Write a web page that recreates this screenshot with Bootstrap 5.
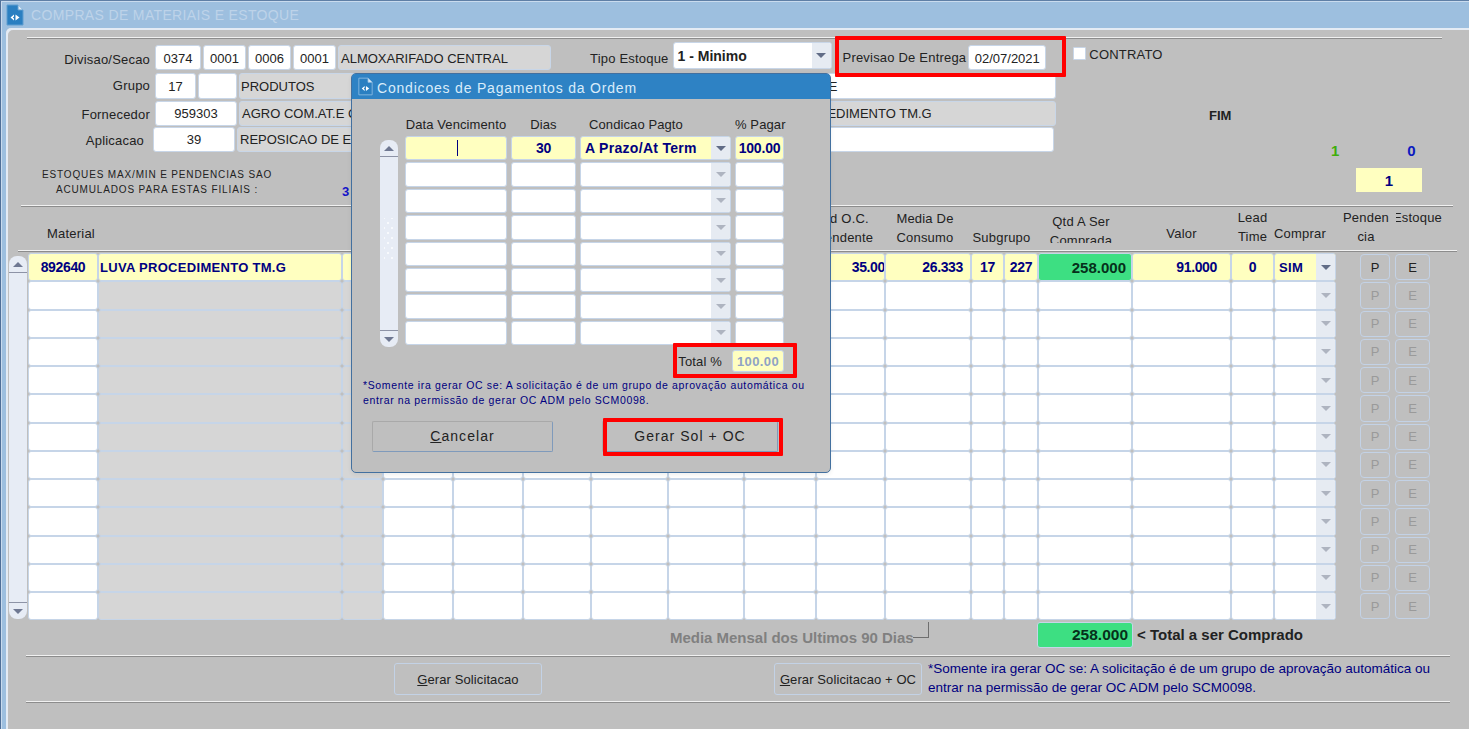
<!DOCTYPE html>
<html lang="pt-BR">
<head>
<meta charset="utf-8">
<title>Compras de Materiais e Estoque</title>
<link href="https://cdn.jsdelivr.net/npm/bootstrap@5.3.0/dist/css/bootstrap.min.css" rel="stylesheet">
<style>
html,body{margin:0;height:729px;overflow:hidden;background:#bfbfbf}
body,.btn{font-family:"Liberation Sans",Arial,sans-serif;font-size:13px;line-height:1;color:#222}
.appwin{width:1469px;height:729px;background:#9dbfdf;border-top:1px solid #5f7fa6;border-left:1px solid #4f6f98;box-shadow:inset 1px 1px 0 #c9dbee;overflow:hidden}
.wintitle{height:27px;padding-left:5px;gap:7px;font-size:14px;letter-spacing:.35px;color:#bdd3e9}
.winpanel{margin-left:5px;height:701px;background:#bfbfbf;border-top-left-radius:5px;box-shadow:inset 2px 2px 0 #e4ebf4;padding-top:9px}
.rule{height:2px;border-top:1px solid #f1f1f1;border-bottom:1px solid #8c8c8c}
.r1{margin-left:21px;width:1415px}.r2{margin-left:15px;width:1432px}.r3{margin-left:12px;width:1439px}.r4{margin-left:20px;width:1424px}
.topzone{margin-top:6px;height:160px}
.topleft{width:1164px}
.frow{gap:2px;align-items:flex-start}
.h28{height:28px}.h26{height:26px}
.lab{letter-spacing:.2px;white-space:nowrap}
.lab-r{width:144px;text-align:right;height:25px;line-height:25px;margin-right:3px}
.lab-for{line-height:28px}
.lab-apl{width:138px;margin-right:7px;line-height:27px}
.fld{height:25px;border:1px solid #c8d6e8;border-radius:3px;background:#fff;display:flex;align-items:center;white-space:nowrap;overflow:hidden;padding:0 2px}
.fld.tall{height:26px}
.fpush{padding-top:2px}
.ptxt{padding-left:1px}
.fgrey{background:#d6d6d6}
.fcen{justify-content:center}
.w46{width:46px}.w43{width:43px}.w41{width:41px}.w39{width:39px}.w82{width:82px}.w78{width:78px}
.wg{width:213px}.wl{width:312px}.wr{width:503px}
.lab-tipo{margin-left:37px;margin-right:2px;height:25px;line-height:27px}
.wrapred{position:relative}
.redbox{position:absolute;border:4px solid #f00;border-radius:1px;pointer-events:none;z-index:5}
.rb1{inset:-9px -20px -7px -8px}
.rb2{inset:-7px -13px -6px -5px}
.rb3{inset:-3px -5px -4px 1px}
.prevwrap{margin-left:9px;gap:2px}
.ctr{margin-left:25px;gap:3px;height:18px}
.chk.form-check-input{width:13px;height:13px;margin:-2px 0 0;border:1px solid #c8d6e8;border-radius:1px;background-color:#fff}
.cmb{padding:0;font-weight:700}
.cmbtxt{padding-left:4px;flex:1 1 auto;min-width:0}
.cmbarr{flex:0 0 19px;align-self:stretch;background:#e6ebf2;display:flex;align-items:center;justify-content:center}
.cmbarr::after{content:"";border-left:5px solid transparent;border-right:5px solid transparent;border-top:5px solid #616c86}
.cmb.off .cmbarr::after{border-top-color:#aeb4c0}
.wcmb{width:159px;height:27px;margin-top:-3px;font-size:14px}
.txtfim{margin-left:218px}
.txtmat{margin-left:198px}
.topright{position:relative}
.fimtxt{margin-top:64px;margin-left:39px;font-weight:700;font-size:13px}
.cnt{margin-top:21px;font-weight:700;font-size:15px;height:17px}
.c1{margin-left:161px;color:#3fae0a}
.c0{margin-left:68px;color:#0a1ac0}
.yelbox{margin-top:8px;margin-left:186px;width:66px;height:24px;background:#ffffc0;color:#000080;font-weight:700;font-size:15px}
.estpos{position:relative;padding-left:36px}
.esttxt{width:230px;text-align:center;font-size:10px;letter-spacing:.85px;line-height:15px;padding-top:14px;color:#222;white-space:nowrap}
.num3{position:absolute;left:336px;top:32px;font-weight:700;color:#1414c8}
.hdrzone{height:43px;margin-left:22px}
.tcols{display:grid;grid-template-columns:70px 244px 41px 70px 70px 68px 77px 76px 72px 69px 86px 33px 34px 94px 99px 43px 62px}
.hc{line-height:19px;text-align:center;letter-spacing:.2px;white-space:nowrap}
.hclip{height:36px;overflow:hidden}
.ph1{padding-top:17px;padding-left:16px}
.pt2{padding-top:2px}.pt1{padding-top:1px}.pt5{padding-top:5px}.pt17{padding-top:17px}.pt21{padding-top:21px}
.hr{text-align:right;padding-right:12px}
.hqoc{display:block;margin-right:13px}
.pad-r6{padding-right:6px}.pad-r8{padding-right:8px}.pad-r10{padding-right:10px}
.hcsm{width:52px;margin-left:4px}
.hcest{width:46px;margin-left:4px;height:36px;overflow:hidden;justify-content:flex-end}
.gridrow{margin-top:1px;height:368px}
.sbar{width:18px;background:#e7ecf5;border-radius:8px;display:flex;flex-direction:column;justify-content:space-between}
.msb{margin-left:3px;margin-top:3px;height:363px}
.sbtn{height:17px;display:flex;align-items:center;justify-content:center}
.sbtn.up{border-bottom:1px solid #8d93a6}
.sbtn.dn{border-top:1px solid #8d93a6}
.sbtn.up::after{content:"";border-left:5px solid transparent;border-right:5px solid transparent;border-bottom:5px solid #6f7892}
.sbtn.dn::after{content:"";border-left:5px solid transparent;border-right:5px solid transparent;border-top:5px solid #6f7892}
.mgrid{margin-left:1px;grid-auto-rows:28.25px}
.gc{border:1px solid #c6d5e8;border-radius:3px;background:#fff;display:flex;align-items:center;white-space:nowrap;overflow:hidden;padding:0 3px}
.gg{background:#d6d6d6}
.gy{background:#ffffc0;color:#000080;font-weight:700;letter-spacing:.3px}
.gn{font-size:14px;letter-spacing:-.35px}
.gtxt{padding-left:1px}
.gcen{justify-content:center}
.grgt{justify-content:flex-end}
.pr1{padding-right:0}.pr7{padding-right:7px}.pr13{padding-right:13px}
.nudge{margin-right:-1px}
.gbig{background:#3ddf82;color:#06301a;font-weight:700;font-size:15px;justify-content:flex-end;padding-right:5px}
.gc.cmb{padding:0}
.pegrid{display:grid;grid-template-columns:30px 35px;column-gap:5px;grid-auto-rows:28.25px;margin-left:24px;align-content:start}
.pebtn.btn{border:1px solid #c3d2e6;border-radius:4px;background:transparent;margin:1px 0;padding:0;color:#222;font-size:13px;display:flex;align-items:center;justify-content:center;--bs-btn-disabled-opacity:1}
.pebtn.btn:disabled{color:#9a9a9a;background:transparent;border-color:#c3d2e6}
.foot{height:26px;margin-top:1px;position:relative}
.mediatxt{position:absolute;left:664px;top:8px;font-weight:700;font-size:15px;letter-spacing:-.02px;color:#808080;white-space:nowrap}
.brk{position:absolute;left:907px;top:0;width:16px;height:16px;border-right:1px solid #6e6e6e;border-bottom:1px solid #6e6e6e}
.gtot{position:absolute;left:1031px;top:0;width:96px;height:26px;background:#3ddf82;border:1px solid #c6d5e8;border-radius:3px;font-weight:700;font-size:15.5px;color:#06301a;padding-right:4px;display:flex;align-items:center;justify-content:flex-end}
.ttot{position:absolute;left:1131px;top:5px;font-weight:700;font-size:15px;white-space:nowrap}
.r4top{margin-top:7px}
.actrow{height:32px;margin:6px 0}
.actbtn.btn{height:32px;background:transparent;border:1px solid #c3d2e6;border-radius:3px;padding:0;color:#222;font-size:13px;letter-spacing:.1px;flex:none}
.ab1{margin-left:388px;width:148px}
.ab2{margin-left:232px;width:148px}
.nota{margin-left:6px;color:#000080;font-size:13.5px;line-height:19px;margin-top:-2px;white-space:nowrap}
/* dialog */
.dlg.card{position:absolute;left:350px;top:72px;width:480px;height:400px;background:#bfbfbf;border:1px solid #43709f;border-radius:5px;z-index:10;--bs-card-bg:#bfbfbf}
.dlghead{height:25px;background:#2e82c4;color:#d9ecfa;font-size:14px;letter-spacing:.8px;padding-left:6px;gap:4px;border-radius:3px 3px 0 0}
.dlgttl{padding-top:2px}
.dlgbody{padding:0 46px 0 0;position:relative}
.dcols{display:grid;grid-template-columns:102px 65px 151px 49px;column-gap:4px;margin-left:53px}
.dlabs{margin-top:17px;height:20px;line-height:18px;letter-spacing:.1px;white-space:nowrap;text-align:center}
.dl3{text-align:left;padding-left:9px}
.dlrow{align-items:flex-start}
.dsb{width:18px;height:207px;margin:4px 0 0 28px;position:relative}
.grip{position:absolute;left:4px;top:78px;width:11px;height:44px;background-image:radial-gradient(circle,#f7f9fc .8px,transparent 1.1px),radial-gradient(circle,#f7f9fc .8px,transparent 1.1px);background-size:8px 10px;background-position:0 0,4px 5px}
.dgrid{margin-left:7px;grid-auto-rows:26.4px}
.dc{margin-bottom:2px;border:1px solid #c6d5e8;border-radius:3px;background:#fff;display:flex;align-items:center;overflow:hidden;white-space:nowrap;padding:0 3px;letter-spacing:.3px}
.dc.cmb{padding:0}
.dy{background:#ffffc0;color:#000080;font-weight:700;font-size:14px}
.dnum{letter-spacing:-.2px}
.caret{width:1px;height:16px;background:#000080;margin-left:48px}
.totrow{justify-content:flex-end;margin-top:3px;height:22px}
.totwrap{gap:10px;align-items:center;letter-spacing:.15px}
.totf{width:52px;height:22px;background:#ffffc0;border:1px solid #c6d5e8;border-radius:3px;color:#8fa3c5;font-weight:700;display:flex;align-items:center;justify-content:center;letter-spacing:.4px}
.dnote{margin:6px 0 0 11px;color:#000080;font-size:10.5px;letter-spacing:.64px;line-height:15px;white-space:nowrap}
.dbtns{margin:13px 0 0 20px;gap:49px}
.dbtn.btn{height:31px;background:#bfbfbf;border:1px solid #9aa7b8;border-right-color:#7f9abb;border-bottom-color:#7f9abb;border-top-color:#a9a9a9;border-left-color:#a9a9a9;border-radius:2px;padding:0 0 2px;font-size:14px;letter-spacing:1.05px;color:#222}
.wcanc{width:181px}.wger{width:176px}
</style>
</head>
<body>
<div class="appwin d-flex flex-column position-relative">
  <div class="wintitle d-flex align-items-center">
    <svg width="18" height="22" viewBox="0 0 18 22" aria-hidden="true"><path d="M1 1H12L17 6V21H1Z" fill="#2a7fc1" stroke="#5f9ed0"/><path d="M12 1V6H17" fill="#dfeaf5" stroke="#5f9ed0"/><path d="M8 10.5 4.5 13.5 8 16.5V14.6L6.8 13.5 8 12.4Z" fill="#fff"/><path d="M9.5 10.5 13.5 13.5 9.5 16.5Z" fill="#fff"/></svg>
    <span>COMPRAS DE MATERIAIS E ESTOQUE</span>
  </div>
  <div class="winpanel position-relative">
    <div class="rule r1"></div>
    <div class="topzone d-flex position-relative">
      <div class="topleft">
        <div class="d-flex frow h28">
          <div class="lab lab-r fpush">Divisao/Secao</div>
          <div class="fld fpush fcen w46">0374</div><div class="fld fpush fcen w43">0001</div><div class="fld fpush fcen w43">0006</div><div class="fld fpush fcen w43">0001</div>
          <div class="fld fpush fgrey wg">ALMOXARIFADO CENTRAL</div>
          <div class="lab lab-tipo">Tipo Estoque</div>
          <div class="fld cmb wcmb"><span class="cmbtxt">1 - Minimo</span><span class="cmbarr"></span></div>
          <div class="d-flex align-items-center wrapred prevwrap"><span class="lab">Previsao De Entrega</span><div class="fld fpush fcen w78">02/07/2021</div><span class="redbox rb1"></span></div>
          <div class="d-flex align-items-center ctr"><input class="form-check-input chk" type="checkbox" aria-label="Contrato"><span class="lab">CONTRATO</span></div>
        </div>
        <div class="d-flex frow h28">
          <div class="lab lab-r">Grupo</div>
          <div class="fld tall fcen w41">17</div><div class="fld tall w39"></div>
          <div class="fld tall fgrey wl ptxt">PRODUTOS</div>
          <div class="fld tall wr"><span class="txtfim">ESTOQUE</span></div>
        </div>
        <div class="d-flex frow h26">
          <div class="lab lab-r lab-for">Fornecedor</div>
          <div class="fld fcen w82">959303</div>
          <div class="fld fgrey wl">AGRO COM.AT.E COMERCIO</div>
          <div class="fld fgrey wr"><span class="txtmat">LUVA PROCEDIMENTO TM.G</span></div>
        </div>
        <div class="d-flex frow h26">
          <div class="lab lab-r lab-apl">Aplicacao</div>
          <div class="fld fcen w82">39</div>
          <div class="fld fgrey wl">REPOSICAO DE ESTOQUE</div>
          <div class="fld wr"></div>
        </div>
        <div class="estpos">
          <div class="esttxt">ESTOQUES MAX/MIN E PENDENCIAS SAO<br>ACUMULADOS PARA ESTAS FILIAIS :</div>
          <span class="num3">3</span>
        </div>
      </div>
      <div class="topright flex-grow-1">
        <div class="fimtxt">FIM</div>
        <div class="cnt d-flex"><span class="c1">1</span><span class="c0">0</span></div>
        <div class="yelbox d-flex align-items-center justify-content-center">1</div>
      </div>
    </div>
    <div class="rule r2"></div>
    <div class="hdrzone d-flex">
      <div class="tcols">
        <div class="hc ph1">Material</div><div></div><div></div><div></div><div></div><div></div><div></div><div></div><div></div>
        <div class="hc pt2 hr"><span class="hqoc">Qtd O.C.</span>Pendente</div>
        <div class="hc pt2 pad-r6">Media De<br>Consumo</div>
        <div class="hc pt21 pad-r6" style="grid-column:span 2">Subgrupo</div>
        <div class="hc hclip pt5 pad-r8">Qtd A Ser<br>Comprada</div>
        <div class="hc pt17">Valor</div>
        <div class="hc pt1">Lead<br>Time</div>
        <div class="hc pt17 pad-r10">Comprar</div>
      </div>
      <div class="hc hcsm pt1">Penden<br>cia</div>
      <div class="hc hcest pt1 d-flex">Estoque</div>
    </div>
    <div class="rule r3"></div>
    <div class="gridrow d-flex">
      <div class="sbar msb"><div class="sbtn up"></div><div class="sbtn dn"></div></div>
      <div class="tcols mgrid">
        <!-- row 1 -->
        <div class="gc gy gn gcen">892640</div><div class="gc gy gtxt">LUVA PROCEDIMENTO TM.G</div><div class="gc gy"></div><div class="gc gy"></div><div class="gc gy"></div><div class="gc gy"></div><div class="gc gy"></div><div class="gc gy"></div><div class="gc gy"></div><div class="gc gy gn grgt pr1"><span class="nudge">35.00</span></div><div class="gc gy gn grgt pr7">26.333</div><div class="gc gy gn gcen">17</div><div class="gc gy gn gcen">227</div><div class="gc gbig">258.000</div><div class="gc gy gn grgt pr13">91.000</div><div class="gc gy gn gcen">0</div><div class="gc gy cmb"><span class="cmbtxt">SIM</span><span class="cmbarr"></span></div>
        <!-- rows 2-13 -->
        <div class="gc"></div><div class="gc gg"></div><div class="gc gg"></div><div class="gc"></div><div class="gc"></div><div class="gc"></div><div class="gc"></div><div class="gc"></div><div class="gc"></div><div class="gc"></div><div class="gc"></div><div class="gc"></div><div class="gc"></div><div class="gc"></div><div class="gc"></div><div class="gc"></div><div class="gc cmb off"><span class="cmbtxt"></span><span class="cmbarr"></span></div>
        <div class="gc"></div><div class="gc gg"></div><div class="gc gg"></div><div class="gc"></div><div class="gc"></div><div class="gc"></div><div class="gc"></div><div class="gc"></div><div class="gc"></div><div class="gc"></div><div class="gc"></div><div class="gc"></div><div class="gc"></div><div class="gc"></div><div class="gc"></div><div class="gc"></div><div class="gc cmb off"><span class="cmbtxt"></span><span class="cmbarr"></span></div>
        <div class="gc"></div><div class="gc gg"></div><div class="gc gg"></div><div class="gc"></div><div class="gc"></div><div class="gc"></div><div class="gc"></div><div class="gc"></div><div class="gc"></div><div class="gc"></div><div class="gc"></div><div class="gc"></div><div class="gc"></div><div class="gc"></div><div class="gc"></div><div class="gc"></div><div class="gc cmb off"><span class="cmbtxt"></span><span class="cmbarr"></span></div>
        <div class="gc"></div><div class="gc gg"></div><div class="gc gg"></div><div class="gc"></div><div class="gc"></div><div class="gc"></div><div class="gc"></div><div class="gc"></div><div class="gc"></div><div class="gc"></div><div class="gc"></div><div class="gc"></div><div class="gc"></div><div class="gc"></div><div class="gc"></div><div class="gc"></div><div class="gc cmb off"><span class="cmbtxt"></span><span class="cmbarr"></span></div>
        <div class="gc"></div><div class="gc gg"></div><div class="gc gg"></div><div class="gc"></div><div class="gc"></div><div class="gc"></div><div class="gc"></div><div class="gc"></div><div class="gc"></div><div class="gc"></div><div class="gc"></div><div class="gc"></div><div class="gc"></div><div class="gc"></div><div class="gc"></div><div class="gc"></div><div class="gc cmb off"><span class="cmbtxt"></span><span class="cmbarr"></span></div>
        <div class="gc"></div><div class="gc gg"></div><div class="gc gg"></div><div class="gc"></div><div class="gc"></div><div class="gc"></div><div class="gc"></div><div class="gc"></div><div class="gc"></div><div class="gc"></div><div class="gc"></div><div class="gc"></div><div class="gc"></div><div class="gc"></div><div class="gc"></div><div class="gc"></div><div class="gc cmb off"><span class="cmbtxt"></span><span class="cmbarr"></span></div>
        <div class="gc"></div><div class="gc gg"></div><div class="gc gg"></div><div class="gc"></div><div class="gc"></div><div class="gc"></div><div class="gc"></div><div class="gc"></div><div class="gc"></div><div class="gc"></div><div class="gc"></div><div class="gc"></div><div class="gc"></div><div class="gc"></div><div class="gc"></div><div class="gc"></div><div class="gc cmb off"><span class="cmbtxt"></span><span class="cmbarr"></span></div>
        <div class="gc"></div><div class="gc gg"></div><div class="gc gg"></div><div class="gc"></div><div class="gc"></div><div class="gc"></div><div class="gc"></div><div class="gc"></div><div class="gc"></div><div class="gc"></div><div class="gc"></div><div class="gc"></div><div class="gc"></div><div class="gc"></div><div class="gc"></div><div class="gc"></div><div class="gc cmb off"><span class="cmbtxt"></span><span class="cmbarr"></span></div>
        <div class="gc"></div><div class="gc gg"></div><div class="gc gg"></div><div class="gc"></div><div class="gc"></div><div class="gc"></div><div class="gc"></div><div class="gc"></div><div class="gc"></div><div class="gc"></div><div class="gc"></div><div class="gc"></div><div class="gc"></div><div class="gc"></div><div class="gc"></div><div class="gc"></div><div class="gc cmb off"><span class="cmbtxt"></span><span class="cmbarr"></span></div>
        <div class="gc"></div><div class="gc gg"></div><div class="gc gg"></div><div class="gc"></div><div class="gc"></div><div class="gc"></div><div class="gc"></div><div class="gc"></div><div class="gc"></div><div class="gc"></div><div class="gc"></div><div class="gc"></div><div class="gc"></div><div class="gc"></div><div class="gc"></div><div class="gc"></div><div class="gc cmb off"><span class="cmbtxt"></span><span class="cmbarr"></span></div>
        <div class="gc"></div><div class="gc gg"></div><div class="gc gg"></div><div class="gc"></div><div class="gc"></div><div class="gc"></div><div class="gc"></div><div class="gc"></div><div class="gc"></div><div class="gc"></div><div class="gc"></div><div class="gc"></div><div class="gc"></div><div class="gc"></div><div class="gc"></div><div class="gc"></div><div class="gc cmb off"><span class="cmbtxt"></span><span class="cmbarr"></span></div>
        <div class="gc"></div><div class="gc gg"></div><div class="gc gg"></div><div class="gc"></div><div class="gc"></div><div class="gc"></div><div class="gc"></div><div class="gc"></div><div class="gc"></div><div class="gc"></div><div class="gc"></div><div class="gc"></div><div class="gc"></div><div class="gc"></div><div class="gc"></div><div class="gc"></div><div class="gc cmb off"><span class="cmbtxt"></span><span class="cmbarr"></span></div>
      </div>
      <div class="pegrid">
        <button class="btn pebtn" type="button">P</button><button class="btn pebtn" type="button">E</button>
        <button class="btn pebtn" type="button" disabled>P</button><button class="btn pebtn" type="button" disabled>E</button>
        <button class="btn pebtn" type="button" disabled>P</button><button class="btn pebtn" type="button" disabled>E</button>
        <button class="btn pebtn" type="button" disabled>P</button><button class="btn pebtn" type="button" disabled>E</button>
        <button class="btn pebtn" type="button" disabled>P</button><button class="btn pebtn" type="button" disabled>E</button>
        <button class="btn pebtn" type="button" disabled>P</button><button class="btn pebtn" type="button" disabled>E</button>
        <button class="btn pebtn" type="button" disabled>P</button><button class="btn pebtn" type="button" disabled>E</button>
        <button class="btn pebtn" type="button" disabled>P</button><button class="btn pebtn" type="button" disabled>E</button>
        <button class="btn pebtn" type="button" disabled>P</button><button class="btn pebtn" type="button" disabled>E</button>
        <button class="btn pebtn" type="button" disabled>P</button><button class="btn pebtn" type="button" disabled>E</button>
        <button class="btn pebtn" type="button" disabled>P</button><button class="btn pebtn" type="button" disabled>E</button>
        <button class="btn pebtn" type="button" disabled>P</button><button class="btn pebtn" type="button" disabled>E</button>
        <button class="btn pebtn" type="button" disabled>P</button><button class="btn pebtn" type="button" disabled>E</button>
      </div>
    </div>
    <div class="foot">
      <span class="mediatxt">Media Mensal dos Ultimos 90 Dias</span><span class="brk"></span>
      <div class="gtot">258.000</div><span class="ttot">&lt; Total a ser Comprado</span>
    </div>
    <div class="rule r4 r4top"></div>
    <div class="actrow d-flex align-items-center">
      <button class="btn actbtn ab1" type="button"><u>G</u>erar Solicitacao</button>
      <button class="btn actbtn ab2" type="button"><u>G</u>erar Solicitacao + OC</button>
      <div class="nota">*Somente ira gerar OC se: A solicitação é de um grupo de aprovação automática ou<br>entrar na permissão de gerar OC ADM pelo SCM0098.</div>
    </div>
    <div class="rule r4"></div>
  </div>

  <div class="card dlg shadow-sm">
    <div class="dlghead d-flex align-items-center">
      <svg width="15" height="19" viewBox="0 0 18 22" aria-hidden="true"><path d="M1 1H12L17 6V21H1Z" fill="#2a7fc1" stroke="#8fbde2"/><path d="M12 1V6H17" fill="#dfeaf5" stroke="#8fbde2"/><path d="M8 10.5 4.5 13.5 8 16.5V14.6L6.8 13.5 8 12.4Z" fill="#fff"/><path d="M9.5 10.5 13.5 13.5 9.5 16.5Z" fill="#fff"/></svg>
      <span class="dlgttl">Condicoes de Pagamentos da Ordem</span>
    </div>
    <div class="dlgbody">
      <div class="dcols dlabs"><div>Data Vencimento</div><div>Dias</div><div class="dl3">Condicao Pagto</div><div>% Pagar</div></div>
      <div class="d-flex dlrow">
        <div class="sbar dsb"><div class="sbtn up"></div><span class="grip"></span><div class="sbtn dn"></div></div>
        <div class="dcols dgrid">
          <div class="dc dy"><span class="caret"></span></div><div class="dc dy dnum justify-content-center">30</div><div class="dc dy cmb"><span class="cmbtxt">A Prazo/At Term</span><span class="cmbarr"></span></div><div class="dc dy dnum justify-content-center">100.00</div>
          <div class="dc"></div><div class="dc"></div><div class="dc cmb off"><span class="cmbtxt"></span><span class="cmbarr"></span></div><div class="dc"></div>
          <div class="dc"></div><div class="dc"></div><div class="dc cmb off"><span class="cmbtxt"></span><span class="cmbarr"></span></div><div class="dc"></div>
          <div class="dc"></div><div class="dc"></div><div class="dc cmb off"><span class="cmbtxt"></span><span class="cmbarr"></span></div><div class="dc"></div>
          <div class="dc"></div><div class="dc"></div><div class="dc cmb off"><span class="cmbtxt"></span><span class="cmbarr"></span></div><div class="dc"></div>
          <div class="dc"></div><div class="dc"></div><div class="dc cmb off"><span class="cmbtxt"></span><span class="cmbarr"></span></div><div class="dc"></div>
          <div class="dc"></div><div class="dc"></div><div class="dc cmb off"><span class="cmbtxt"></span><span class="cmbarr"></span></div><div class="dc"></div>
          <div class="dc"></div><div class="dc"></div><div class="dc cmb off"><span class="cmbtxt"></span><span class="cmbarr"></span></div><div class="dc"></div>
        </div>
      </div>
      <div class="d-flex totrow">
        <div class="d-flex totwrap wrapred"><span>Total %</span><div class="totf">100.00</div><span class="redbox rb2"></span></div>
      </div>
      <div class="dnote">*Somente ira gerar OC se: A solicitação é de um grupo de aprovação automática ou<br>entrar na permissão de gerar OC ADM pelo SCM0098.</div>
      <div class="d-flex dbtns">
        <button class="btn dbtn wcanc" type="button"><u>C</u>ancelar</button>
        <div class="wrapred d-flex"><button class="btn dbtn wger" type="button">Gerar Sol + OC</button><span class="redbox rb3"></span></div>
      </div>
    </div>
  </div>
</div>
</body>
</html>
